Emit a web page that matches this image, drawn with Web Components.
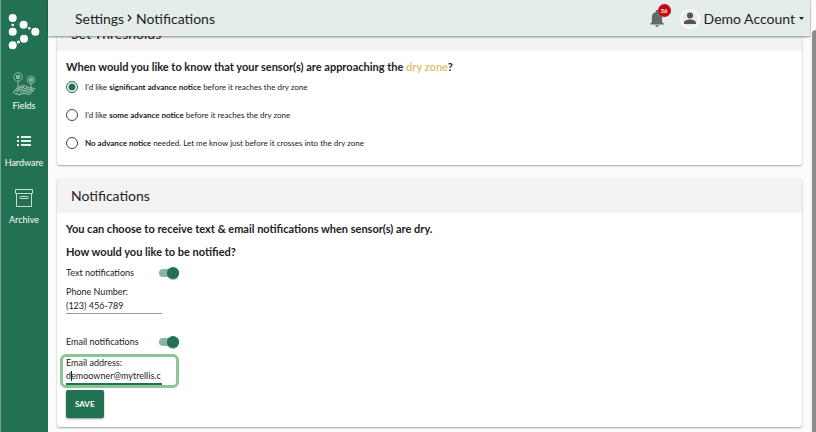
<!DOCTYPE html>
<html lang="en">
<head>
<meta charset="utf-8">
<title>Settings - Notifications</title>
<style>
    html, body {
        margin: 0;
        height: 100%;
    }

    body {
        --green: #237153;
        --ink: #222;
        font-family: Lato, "Open Sans", sans-serif;
        color: var(--ink);
        background: #fcfcfc;
        overflow: hidden;
    }
</style>
</head>
<body>
<app-shell>
    <side-nav slot="nav">
        <nav-item label="Fields">
            <svg width="24" height="24" viewBox="0 0 24 24" fill="none" stroke="#a9cdbd" stroke-width="0.8">
                <circle cx="6" cy="5" r="4.2"/><circle cx="19" cy="8" r="3.7"/>
                <path d="M4.500 3.500h3v3h-3zM4.500 5h3M6 3.500v3M17.500 6.500h3v3h-3zM17.500 8h3M19 6.500v3M6 9.200v6M19 11.700v6"/>
                <path d="M6 15L12 13.500L17 15.500L23 16.500L18 22.500L12 21.500L7 23L1 20.500zM4.500 16.500L10.500 15.500L16 17.500L21.500 18.500M2.800 18.500L9 17.800L14.500 19.500L20 20.300M9 14.200L4 21.800M12 13.500L7 23M15 14.800L9.500 22.200M17.500 15.600L12 21.500M20.500 16L15 22"/>
            </svg>
        </nav-item>
        <nav-item label="Hardware">
            <svg width="24" height="24" viewBox="0 0 24 24" fill="#e6f2ec">
                <path d="M5 7h2v2H5zM5 11h2v2H5zM5 15h2v2H5zM9 7h10v2H9zM9 11h10v2H9zM9 15h10v2H9z"/>
            </svg>
        </nav-item>
        <nav-item label="Archive">
            <svg width="24" height="24" viewBox="0 0 24 24" fill="none" stroke="#c5ded3" stroke-width="1">
                <path d="M3.500 3.500h17v4h-17zM4.500 7.500v13h15v-13"/>
                <rect x="7.500" y="10.500" width="9" height="2" rx="1"/>
            </svg>
        </nav-item>
    </side-nav>
    <top-bar slot="bar" section="Settings" page="Notifications" user="Demo Account" count="36"></top-bar>
    <settings-card heading="Set Thresholds">
        <threshold-picker></threshold-picker>
    </settings-card>
    <settings-card heading="Notifications">
        <notification-form></notification-form>
    </settings-card>
</app-shell>

<script>
class AppShell extends HTMLElement {

    constructor() {
        super();
        this.attachShadow({ mode: "open" });
    }

    connectedCallback() {
        this.shadowRoot.innerHTML = `
        <style>
            :host {
                display: grid;
                grid-template-columns: 48px 1fr 6px;
                height: 100vh;
            }

            .page {
                display: flex;
                flex-direction: column;
                min-width: 0;
            }

            .view {
                flex: 1;
                min-height: 0;
                overflow: hidden;
            }

            /* the list is scrolled a little under the bar */
            main {
                display: flex;
                flex-direction: column;
                gap: 13px;
                margin-top: -20px;
                padding: 0 8px 5px 9px;
            }

            .scroll {
                display: flex;
                border-left: 1px solid #ececec;
                padding: 30px 0 0 1px;
            }

            .thumb {
                flex: 1;
                border-radius: 4px 0 0 0;
                background: #8b8b8b;
            }
        </style>
        <slot name="nav"></slot>
        <div class="page">
            <slot name="bar"></slot>
            <div class="view">
                <main><slot></slot></main>
            </div>
        </div>
        <div class="scroll"><div class="thumb"></div></div>
        `;
    }
}

class SideNav extends HTMLElement {

    constructor() {
        super();
        this.attachShadow({ mode: "open" });
    }

    connectedCallback() {
        this.shadowRoot.innerHTML = `
        <style>
            :host {
                display: block;
                box-sizing: border-box;
                border-left: 1px solid #6fa48f;
                padding-right: 1px;
                background: var(--green);
            }

            .logo {
                display: flex;
                justify-content: center;
                padding: 12px 0 22px;
            }

            nav {
                display: flex;
                flex-direction: column;
                gap: 17px;
            }
        </style>
        <div class="logo">
            <svg width="32" height="38" viewBox="0 0 32 38" fill="#fff">
                <circle cx="4.700" cy="6" r="4"/><circle cx="4.700" cy="19.700" r="4"/>
                <circle cx="4.700" cy="33.200" r="4"/><circle cx="15.600" cy="12.800" r="4"/>
                <circle cx="16" cy="26.800" r="4"/><circle cx="27.300" cy="19.700" r="4"/>
                <circle cx="4.700" cy="13" r="1.300"/><circle cx="21.300" cy="16.300" r="1.300"/>
                <circle cx="10.400" cy="30" r="1.500"/>
            </svg>
        </div>
        <nav><slot></slot></nav>
        `;
    }
}

class NavItem extends HTMLElement {

    constructor() {
        super();
        this.attachShadow({ mode: "open" });
    }

    connectedCallback() {
        this.shadowRoot.innerHTML = `
        <style>
            :host {
                display: block;
            }

            a {
                display: flex;
                flex-direction: column;
                align-items: center;
                gap: 4px;
                color: #fff;
                font-size: 9px;
                line-height: 12px;
                text-decoration: none;
            }
        </style>
        <a href="#"><slot></slot>${this.getAttribute("label")}</a>
        `;
    }
}

class TopBar extends HTMLElement {

    constructor() {
        super();
        this.attachShadow({ mode: "open" });
    }

    connectedCallback() {
        this.shadowRoot.innerHTML = `
        <style>
            :host {
                position: relative;
                z-index: 1;
                display: flex;
                flex: none;
                align-items: center;
                box-sizing: border-box;
                height: 36px;
                padding: 2px 6px 0 27px;
                background: #e4edea;
                box-shadow: 0 1px 2px rgba(0, 0, 0, 0.45);
                font-size: 14px;
                line-height: 18px;
            }

            h1 {
                display: flex;
                align-items: center;
                gap: 3px;
                margin: 0 auto 0 0;
                font-size: 14px;
                font-weight: normal;
            }

            button {
                display: flex;
                align-items: center;
                border: 0;
                padding: 0;
                background: none;
                color: inherit;
                font: inherit;
            }

            .bell {
                position: relative;
                margin-right: 14px;
            }

            .badge {
                position: absolute;
                left: 10px;
                top: -5px;
                width: 13px;
                border-radius: 7px;
                background: #c4060e;
                color: #fff;
                font-size: 6px;
                font-weight: bold;
                line-height: 13px;
                text-align: center;
            }

            .account {
                gap: 4px;
            }
        </style>
        <h1>
            <span>${this.getAttribute("section")}</span>
            <svg width="6" height="10" viewBox="0 0 6 10" fill="none" stroke="#222" stroke-width="1.300"><path d="M1 1l3 3L1 7"/></svg>
            <span>${this.getAttribute("page")}</span>
        </h1>
        <button class="bell" aria-label="Alerts">
            <svg width="18" height="20" viewBox="0 0 18 20" fill="#656a68">
                <path d="M9 1c.8 0 1.300.5 1.300 1.300v.6c2.300.6 3.800 2.600 3.800 5.100V13l1.700 1.700v.8H2.200v-.8L3.900 13V8c0-2.500 1.500-4.500 3.800-5.100v-.6C7.700 1.500 8.200 1 9 1zM7.300 16.200h3.400a1.700 1.700 0 0 1-3.400 0z"/>
            </svg>
            <span class="badge">${this.getAttribute("count")}</span>
        </button>
        <button class="account">
            <svg width="20" height="20" viewBox="0 0 20 20">
                <circle cx="10" cy="10" r="9" fill="#e9e9e9" stroke="#fff" stroke-width="1.500"/>
                <circle cx="10" cy="6.500" r="3" fill="#555"/>
                <path d="M4 15v-1.300c0-2 4-3.100 6-3.100s6 1.100 6 3.100V15z" fill="#555"/>
            </svg>
            <span>${this.getAttribute("user")}</span>
            <svg width="5" height="4" viewBox="0 0 5 4" fill="#222"><path d="M0 0h5L2.500 3z"/></svg>
        </button>
        `;
    }
}

class SettingsCard extends HTMLElement {

    constructor() {
        super();
        this.attachShadow({ mode: "open" });
    }

    connectedCallback() {
        this.shadowRoot.innerHTML = `
        <style>
            :host {
                display: block;
                border-radius: 3px;
                background: #fff;
                box-shadow: 0 1px 2px rgba(0, 0, 0, 0.35);
            }

            h2 {
                margin: 0;
                padding: 9px 14px 8px;
                border-radius: 3px 3px 0 0;
                background: #f3f3f3;
                font-size: 14px;
                font-weight: normal;
                line-height: 18px;
            }

            .body {
                padding: 8px 9px 9px;
            }
        </style>
        <h2>${this.getAttribute("heading")}</h2>
        <div class="body"><slot></slot></div>
        `;
    }
}

class ThresholdPicker extends HTMLElement {

    constructor() {
        super();
        this.attachShadow({ mode: "open" });
    }

    connectedCallback() {
        this.shadowRoot.innerHTML = `
        <style>
            :host {
                display: block;
            }

            fieldset {
                display: flex;
                flex-direction: column;
                gap: 16px;
                margin: 0;
                border: 0;
                padding: 0 0 7px;
            }

            legend {
                padding: 0 0 6px;
                font-size: 11px;
                font-weight: bold;
                line-height: 16px;
            }

            em {
                color: #e0c27a;
                font-style: normal;
            }

            label {
                display: flex;
                align-items: center;
                gap: 7px;
                font-size: 8px;
                line-height: 12px;
            }

            input {
                appearance: none;
                box-sizing: border-box;
                width: 12px;
                height: 12px;
                margin: 0;
                border: 1px solid #444;
                border-radius: 50%;
            }

            input:checked {
                border-color: var(--green);
                background: radial-gradient(circle, var(--green) 3px, transparent 4px);
            }
        </style>
        <fieldset>
            <legend>When would you like to know that your sensor(s) are approaching the <em>dry zone</em>?</legend>
            <label><input type="radio" name="notice" checked><span>I'd like <b>significant advance notice</b> before it reaches the dry zone</span></label>
            <label><input type="radio" name="notice"><span>I'd like <b>some advance notice</b> before it reaches the dry zone</span></label>
            <label><input type="radio" name="notice"><span><b>No advance notice</b> needed. Let me know just before it crosses into the dry zone</span></label>
        </fieldset>
        `;
    }
}

class NotificationForm extends HTMLElement {

    constructor() {
        super();
        this.attachShadow({ mode: "open" });
    }

    connectedCallback() {
        this.shadowRoot.innerHTML = `
        <style>
            :host {
                display: block;
            }

            h3 {
                margin: 0 0 7px;
                font-size: 11px;
                font-weight: bold;
                line-height: 16px;
            }

            .switch {
                display: flex;
                align-items: center;
                justify-content: space-between;
                width: 113px;
                font-size: 9px;
                line-height: 12px;
            }

            .switch input {
                display: flex;
                align-items: center;
                justify-content: flex-end;
                appearance: none;
                width: 20px;
                height: 8px;
                margin: 0;
                border-radius: 4px;
                background: #8db5a5;
            }

            .switch input::before {
                content: "";
                width: 12px;
                height: 12px;
                border-radius: 50%;
                background: var(--green);
                box-shadow: 0 1px 1px rgba(0, 0, 0, 0.3);
            }

            .field {
                position: relative;
                display: flex;
                flex-direction: column;
                width: 96px;
                font-size: 9px;
                line-height: 11px;
            }

            .field input {
                box-sizing: border-box;
                width: 100%;
                height: 17px;
                border: 0;
                border-bottom: 1px solid #999;
                outline: 0;
                padding: 0;
                background: none;
                color: inherit;
                font: inherit;
            }

            .phone {
                margin: 7px 0 22px;
            }

            .email {
                margin: 6px 0 2px -6px;
                border: 3px solid #8bc795;
                border-radius: 6px;
                padding: 0 14px 0 3px;
            }

            .email input {
                border-bottom: 2px solid var(--green);
            }

            .caret {
                position: absolute;
                left: 8px;
                bottom: 4px;
                width: 1px;
                height: 10px;
                background: #222;
            }

            button {
                border: 0;
                border-radius: 2px;
                padding: 0 9px;
                background: var(--green);
                box-shadow: 0 1px 2px rgba(0, 0, 0, 0.4);
                color: #fff;
                font: bold 8px/28px Lato, sans-serif;
            }
        </style>
        <h3>You can choose to receive text &amp; email notifications when sensor(s) are dry.</h3>
        <h3>How would you like to be notified?</h3>
        <label class="switch">Text notifications<input type="checkbox" role="switch" checked></label>
        <label class="field phone">Phone Number:<input type="tel" value="(123) 456-789"></label>
        <label class="switch">Email notifications<input type="checkbox" role="switch" checked></label>
        <label class="field email">Email address:<input type="text" value="demoowner@mytrellis.c"><span class="caret"></span></label>
        <button type="submit">SAVE</button>
        `;
    }
}

customElements.define("app-shell", AppShell);
customElements.define("side-nav", SideNav);
customElements.define("nav-item", NavItem);
customElements.define("top-bar", TopBar);
customElements.define("settings-card", SettingsCard);
customElements.define("threshold-picker", ThresholdPicker);
customElements.define("notification-form", NotificationForm);
</script>
</body>
</html>
